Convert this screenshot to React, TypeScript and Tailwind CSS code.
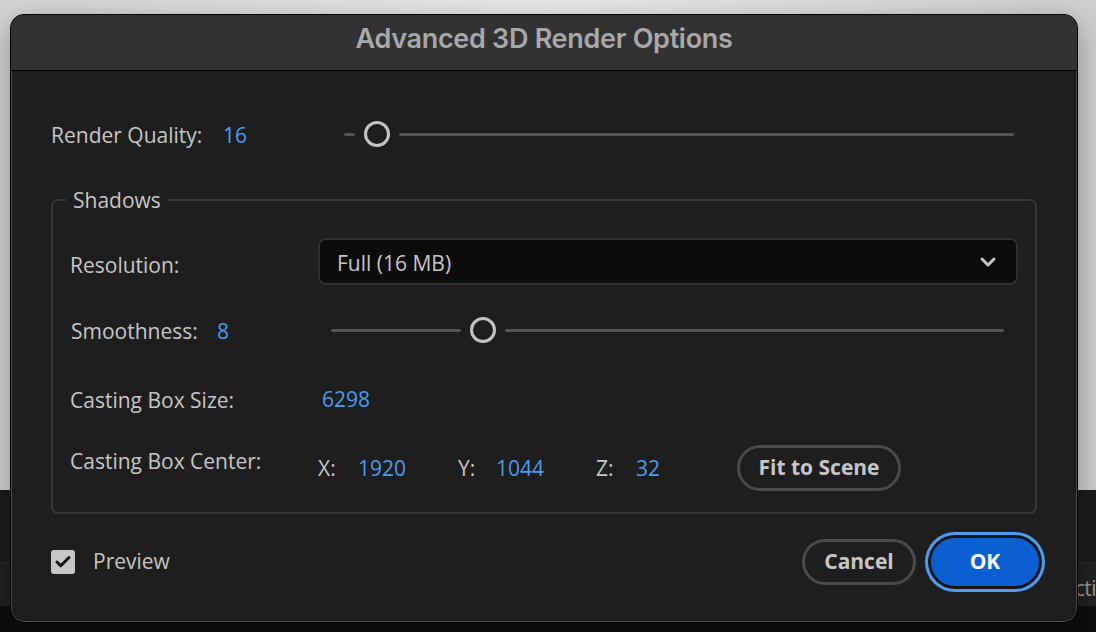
import { Check, ChevronDown } from 'lucide-react';

const body = { fontFamily: '"Open Sans", "Noto Sans", sans-serif' };

function Slider({ left, className }: { left: number; className: string }) {
  return (
    <div className={`flex items-center h-[28px] ${className}`}>
      <div className="h-[3px] rounded-full bg-[#535353]" style={{ width: left }} />
      <div className="mx-[9px] h-[26px] w-[26px] shrink-0 rounded-full border-[3px] border-[#c4c4c4] bg-[#1e1e1e]" />
      <div className="h-[3px] flex-1 rounded-full bg-[#535353]" />
    </div>
  );
}

function Value({ children, className = '' }: { children: React.ReactNode; className?: string }) {
  return <span className={`text-[#4c9bef] ${className}`}>{children}</span>;
}

export default function App() {
  return (
    <div className="relative h-[632px] w-[1096px] overflow-hidden bg-[#161616]" style={body}>
      {/* desktop / app behind the dialog */}
      <div className="flex h-full flex-col">
        <div className="h-[490px] bg-gradient-to-r from-[#d4d4d4] via-[#ececec] to-[#cfcfcf]" />
        <div className="h-[72px] bg-[#1b1b1b]" />
        <div className="flex h-[44px] items-center justify-end border-t border-[#2c2c2c] bg-[#222222] pt-[8px]">
          <span className="text-[21px] text-[#9a9a9a] tracking-tight">cti</span>
        </div>
        <div className="flex-1 bg-[#0f0f0f]" />
      </div>

      {/* dialog */}
      <div className="absolute left-[10px] top-[14px] flex h-[609px] w-[1068px] flex-col overflow-hidden rounded-[14px] border border-black bg-[#1e1e1e] shadow-[inset_0_0_0_1px_#4a4a4a,0_8px_30px_rgba(0,0,0,0.35)]">
        <div className="flex h-[56px] shrink-0 items-center justify-center border-b border-black bg-[#323232] pb-[7px]">
          <span
            className="text-[27px] font-semibold text-[#a8a8a8] tracking-[-0.3px]"
            style={{ fontFamily: 'Inter, "Liberation Sans", sans-serif' }}
          >
            Advanced 3D Render Options
          </span>
        </div>

        <div className="flex flex-1 flex-col px-[40px] pt-[39px] text-[21px] text-[#c6c6c6]">
          {/* Render quality */}
          <div className="flex h-[48px] items-center">
            <span className="w-[172px] translate-y-[2px]">Render Quality:</span>
            <Value className="w-[121px] translate-y-[2px]">16</Value>
            <Slider left={11} className="w-[670px]" />
          </div>

          {/* Shadows */}
          <fieldset className="mt-[27px] rounded-[7px] border-2 border-[#363636] px-[17px] pb-[21px] pt-[23px]">
            <legend className="ml-[-4px] px-[7px] leading-[30px]">Shadows</legend>

            <div className="flex h-[47px] items-center">
              <span className="w-[248px] translate-y-[4px]">Resolution:</span>
              <div className="flex h-[47px] flex-1 items-center justify-between rounded-[8px] border-2 border-[#2f2f2f] bg-[#0c0c0c] pl-[17px] pr-[16px]">
                <span className="translate-y-[2px]">Full (16 MB)</span>
                <ChevronDown className="h-[24px] w-[24px] text-[#c4c4c4]" strokeWidth={3} />
              </div>
            </div>

            <div className="mt-[22px] flex h-[46px] items-center">
              <span className="w-[147px] pl-[1px] translate-y-[2px]">Smoothness:</span>
              <Value className="w-[114px] translate-y-[2px]">8</Value>
              <Slider left={130} className="mr-[14px] flex-1" />
            </div>

            <div className="mt-[23px] flex h-[46px] items-center">
              <span className="w-[252px] translate-y-[2px]">Casting Box Size:</span>
              <Value className="translate-y-[1px]">6298</Value>
            </div>

            <div className="mt-[23px] flex h-[46px] items-center">
              <span className="w-[248px] -translate-y-[6px]">Casting Box Center:</span>
              <div className="flex translate-y-[1px] items-center">
                <span className="w-[40px]">X:</span>
                <Value className="w-[100px]">1920</Value>
                <span className="w-[38px]">Y:</span>
                <Value className="w-[100px]">1044</Value>
                <span className="w-[40px]">Z:</span>
                <Value className="w-[101px]">32</Value>
              </div>
              <button className="flex h-[46px] w-[164px] items-center justify-center rounded-full border-[3px] border-[#4a4a4a] font-bold text-[#c6c6c6]">
                Fit to Scene
              </button>
            </div>
          </fieldset>

          {/* footer */}
          <div className="mt-[24px] flex items-center">
            <div className="flex h-[24px] w-[24px] items-center justify-center rounded-[3px] bg-[#c6c6c6]">
              <Check className="h-[18px] w-[18px] text-[#141414]" strokeWidth={4} />
            </div>
            <span className="ml-[18px]">Preview</span>
            <div className="-mr-[2px] ml-auto flex items-center gap-[15px]">
              <button className="flex h-[46px] w-[114px] items-center justify-center rounded-full border-[3px] border-[#4a4a4a] font-bold text-[#c6c6c6]">
                Cancel
              </button>
              <button className="flex h-[48px] w-[108px] items-center justify-center rounded-full bg-[#0b5fd0] font-bold text-white ring-[3px] ring-[#4d9cf0] ring-offset-[3px] ring-offset-[#161616]">
                OK
              </button>
            </div>
          </div>
        </div>
      </div>
    </div>
  );
}
